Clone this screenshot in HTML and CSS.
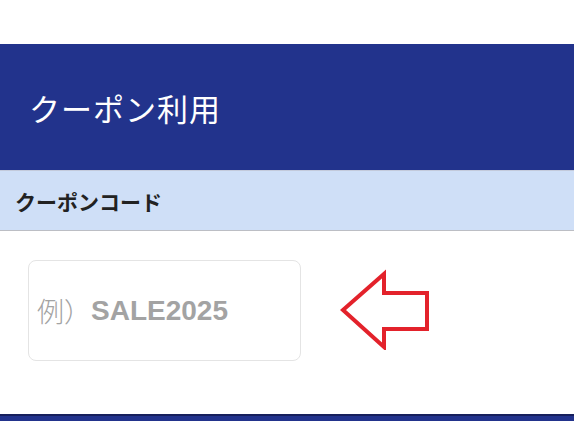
FILE: index.html
```html
<!DOCTYPE html>
<html lang="ja">
<head>
    <meta charset="UTF-8">
    <meta name="viewport" content="width=device-width, initial-scale=1.0">
    <title>クーポン利用</title>
    <link rel="stylesheet" href="styles.css">
</head>
<body>
    <div class="top-gap"></div>
    <header class="page-header">
        <h1>クーポン利用</h1>
    </header>
    <div class="section-title">クーポンコード</div>
    <main class="coupon-body">
        <div class="coupon-input">
            <span class="ph-jp">例）</span><span class="ph-code">SALE2025</span>
        </div>
        <svg class="hint-arrow" width="92" height="82" viewBox="0 0 92 82">
            <polygon points="3,42 44,6 44,25 87,25 87,61 44,61 44,79" fill="none" stroke="#e3222b" stroke-width="4" stroke-linejoin="miter"/>
        </svg>
    </main>
    <footer class="page-footer"></footer>
</body>
</html>
```

FILE: styles.css
```css
body {
    margin: 0;
    padding: 0;
    background: #fff;
    font-family: "Noto Sans CJK JP", "Noto Sans", sans-serif;
}
.top-gap {
    height: 44px;
}
.page-header {
    background-color: #22338c;
    height: 126px;
    display: flex;
    align-items: center;
    padding-left: 29px;
    border-bottom: 1px solid #c3cadb;
}
.page-header h1 {
    margin: 0;
    color: #fff;
    font-size: 31px;
    font-weight: 400;
    letter-spacing: 1px;
}
.section-title {
    background-color: #cfdff7;
    height: 59px;
    display: flex;
    align-items: center;
    padding-left: 15px;
    font-size: 21px;
    font-weight: 600;
    color: #222;
    border-bottom: 1px solid #bcbec4;
}
.coupon-body {
    display: flex;
    align-items: flex-start;
    height: 183px;
    box-sizing: border-box;
    padding: 29px 0 0 28px;
}
.coupon-input {
    box-sizing: border-box;
    width: 273px;
    height: 101px;
    border: 1px solid #e4e4e4;
    border-radius: 8px;
    padding: 0 8px;
    display: flex;
    align-items: center;
    color: #a3a3a3;
}
.ph-jp {
    font-size: 27px;
    font-weight: 300;
}
.ph-code {
    font-family: "Liberation Sans", sans-serif;
    font-size: 28px;
    font-weight: 700;
}
.hint-arrow {
    margin: 8px 0 0 39px;
}
.page-footer {
    background-color: #22338c;
    border-top: 2px solid #161f5c;
    height: 40px;
}
```
